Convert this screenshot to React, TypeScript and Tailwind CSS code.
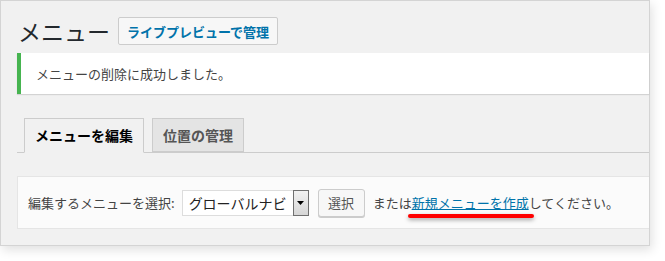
import React from "react";

const font = { fontFamily: '"Noto Sans CJK JP", "Noto Sans", sans-serif' };

export default function App() {
  return (
    <div className="w-[665px] h-[261px] bg-white overflow-hidden" style={font}>
      <div className="w-[650px] h-[246px] border border-[#d4d4d4] bg-[#f1f1f1] shadow-[2px_4px_10px_rgba(0,0,0,0.12)] pl-[16px] pt-[15px] flex flex-col">
        {/* header */}
        <div className="flex items-center h-[30px]">
          <h1 className="text-[23px] leading-none text-[#23282d] ml-[1px] tracking-[0px]">メニュー</h1>
          <button className="ml-[8px] h-[28px] w-[160px] border border-[#ccc] rounded-[2px] bg-[#f7f7f7] text-[13px] font-semibold text-[#0073aa] leading-none flex items-center justify-center">
            ライブプレビューで管理
          </button>
        </div>
        {/* notice */}
        <div className="mt-[7px] h-[41px] bg-white border-l-[4px] border-[#46b450] shadow-[0_1px_1px_rgba(0,0,0,0.12)] flex items-center pl-[15px] text-[13px] text-[#444]">
          メニューの削除に成功しました。
        </div>
        {/* tabs */}
        <div className="mt-[24px] h-[35px] border-b border-[#ccc] flex items-end pl-[7px] gap-[8px]">
          <div className="w-[120px] h-[35px] -mb-px border border-[#ccc] border-b-[#f1f1f1] bg-[#f1f1f1] text-[14px] font-bold text-black flex items-center justify-center">
            メニューを編集
          </div>
          <div className="w-[92px] h-[34px] border border-[#ccc] bg-[#e4e4e4] text-[14px] font-bold text-[#555] flex items-center justify-center">
            位置の管理
          </div>
        </div>
        {/* select box */}
        <div className="mt-[23px] h-[53px] border border-r-0 border-[#e5e5e5] bg-[#fbfbfb] flex items-center pl-[10px] text-[13px] text-[#444]">
          <span>編集するメニューを選択:</span>
          <div className="ml-[7px] w-[127px] h-[26px] border border-[#ddd] bg-white flex items-stretch">
            <span className="flex-1 flex items-center pl-[6px] text-[14px] text-[#222] leading-none">グローバルナビ</span>
            <span className="w-[16px] border border-[#707070] bg-gradient-to-b from-[#f2f2f2] to-[#d6d6d6] flex items-center justify-center -my-px -mr-px">
              <svg width="7" height="4" viewBox="0 0 7 4"><path d="M0 0h7L3.5 4z" fill="#000" /></svg>
            </span>
          </div>
          <button className="ml-[9px] w-[47px] h-[28px] border border-[#ccc] rounded-[3px] bg-[#f7f7f7] shadow-[0_1px_0_#ccc] text-[13px] text-[#555] flex items-center justify-center">
            選択
          </button>
          <span className="ml-[8px]">または</span>
          <span className="relative">
            <a className="text-[#0073aa] underline">新規メニューを作成</a>
            <span className="absolute left-[-4px] right-[-5px] top-[21px] h-[4px] rounded-full bg-[#ff0000] shadow-[0_2px_4px_rgba(0,0,0,0.35)]" />
          </span>
          <span>してください。</span>
        </div>
      </div>
    </div>
  );
}
